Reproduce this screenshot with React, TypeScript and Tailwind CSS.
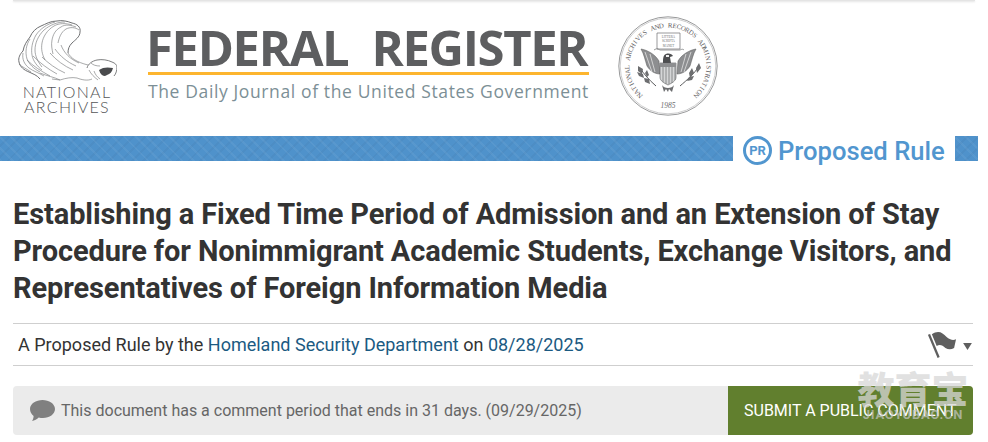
import React from 'react';

const stripes =
  'bg-[repeating-linear-gradient(45deg,rgba(255,255,255,0.05)_0px,rgba(255,255,255,0.05)_2px,transparent_2px,transparent_8px),repeating-linear-gradient(-45deg,rgba(0,0,0,0.03)_0px,rgba(0,0,0,0.03)_2px,transparent_2px,transparent_8px)]';

const ArchivesEagle = () => (
  <svg viewBox="0 0 100 62" className="w-[100px] h-[62px]" fill="none" stroke="#6f7072" strokeWidth="0.6">
    {/* wing outline and feathers */}
    <path d="M63 12c1-5-3-8-8-9-5-2-10-3-15-2-7 0-11 3-16 5-5 2-9 6-11 11-3 4-6 8-7 14-3 3-5 7-4 11 1 5 5 8 10 10 4 2 8 3 11 7" strokeWidth="1" />
    <path d="M63 12c0 5-5 8-8 11-3 3-4 6-4 10" strokeWidth="1" />
    <path d="M59 7c-5-2-11-3-15 0-6 3-8 8-9 13-1 5 0 9 1 14" />
    <path d="M62 10c-4-3-9-3-13-1-5 3-7 9-8 14" />
    <path d="M55 5c-6-2-13-2-18 1-7 4-11 11-12 17-1 6 0 11 3 17" />
    <path d="M48 2c-8 0-15 3-21 8-6 6-9 13-9 20 0 6 3 12 7 17" />
    <path d="M38 2c-8 2-15 7-19 13-4 7-5 14-4 20 1 6 5 11 10 15" />
    <path d="M13 19c-4 6-5 13-3 20 2 5 7 10 13 13" />
    <path d="M6 33c-1 6 1 11 6 15 4 3 10 5 15 8" />
    <path d="M2 44c3 3 8 5 12 8" />
    <path d="M10 40c6 6 14 11 23 16" />
    <path d="M16 36c7 7 15 13 24 18" />
    <path d="M25 37c6 6 14 12 23 16" />
    <path d="M33 33c6 7 14 13 23 17" />
    <path d="M38 29c5 7 12 13 21 17" />
    <path d="M44 25c3 8 9 14 18 18" />
    <path d="M51 33c3 5 8 9 20 12" />
    <path d="M23 53c7 3 14 4 20 7l-8-1M43 60c6-2 12-3 17-2 5 2 11 3 15 1" />
    {/* head */}
    <path d="M70 48c1-4 5-7 10-8 5-1 11 0 15 2 3 1 5 3 5 5 0 3-1 7-3 9" strokeWidth="0.9" />
    <path d="M82 50c4-3 9-3 14-2-1 4-3 6-6 7-3 2-6 1-8-5z" fill="#4a4b4d" stroke="none" />
    <path d="M74 43c2 2 5 3 9 3M72 50c2 4 5 7 9 10M77 51c1 3 3 6 6 8" />
  </svg>
);

const ringLetters = 'NATIONAL ARCHIVES AND RECORDS ADMINISTRATION'.split('');

const SealRing = () => (
  <g fontSize="6.8" fill="#5f6062" stroke="none" fontFamily="'Liberation Serif', serif" textAnchor="middle">
    {ringLetters.map((ch, i) => (
      <text
        key={i}
        x="50"
        y="11.5"
        transform={`rotate(${-136 + (i * 272) / (ringLetters.length - 1)} 50 50)`}
      >
        {ch}
      </text>
    ))}
  </g>
);

const SealEagle = () => (
  <g>
    {/* scroll */}
    <path d="M39 17h23v16H39z" fill="#fff" stroke="#6d6e70" strokeWidth="0.7" />
    <path d="M36 34c3-2 4-1 6 0h20c2-1 3-1 4 0" stroke="#6d6e70" strokeWidth="0.7" fill="none" />
    <g fontSize="3.2" fill="#6d6e70" textAnchor="middle" fontFamily="'Liberation Serif', serif">
      <text x="50.5" y="21.5">LITTERA</text>
      <text x="50.5" y="26">SCRIPTA</text>
      <text x="50.5" y="30.5">MANET</text>
    </g>
    {/* wings */}
    <path d="M23 33c6 1 14 5 18 12l1 13c-5 0-10-3-13-8-2-6-3-12-6-17z" fill="#8d8e90" stroke="#555" strokeWidth="0.5" />
    <path d="M78 33c-6 1-14 5-18 12l-1 13c5 0 10-3 13-8 2-6 3-12 6-17z" fill="#8d8e90" stroke="#555" strokeWidth="0.5" />
    <path d="M27 36l7 20M32 38l5 18M68 38l-5 18M73 36l-7 20" stroke="#eee" strokeWidth="0.7" />
    {/* head */}
    <path d="M45 47c0-4 0-8 3-9 3-1 6 0 7 2l-3 1 1 6z" fill="#4d4e50" />
    <path d="M48 39h3v2h-3z" fill="#eee" />
    {/* shield */}
    <path d="M42 47h16v14c0 4-4 6-8 8-4-2-8-4-8-8z" fill="#d5d6d7" stroke="#58595b" strokeWidth="0.6" />
    <path d="M42 47h16v4H42z" fill="#8d8e90" />
    <path d="M45 51v15M48 51v17M51 51v17M54 51v16M57 51v13" stroke="#77787a" strokeWidth="0.8" />
    {/* olive and arrows */}
    <path d="M22 52c4 6 9 12 16 18" stroke="#58595b" strokeWidth="1" fill="none" />
    <path d="M20 50l5 3-1 5-4-3zM19 56l6 2 1 4-5-2zM26 62l5 1 1 5-5-2zM29 54l2 5-2 2-2-4z" fill="#6d6e70" />
    <path d="M81 50c-4 7-12 14-19 20" stroke="#58595b" strokeWidth="1" fill="none" />
    <path d="M81 47l2 5-4 5-1-5zM74 52l2 5-4 5-1-5zM76 60l-2 4-5 1 2-4z" fill="#6d6e70" />
    {/* tail */}
    <path d="M44 69c2 4 10 4 12 0l-2 7-3-3-1 3-2-3-2 3z" fill="#6d6e70" />
  </g>
);

const Seal = () => (
  <svg viewBox="0 0 100 100" className="w-[100px] h-[100px]" fill="none">
    <circle cx="50" cy="50" r="49.2" stroke="#6d6e70" strokeWidth="0.7" />
    <circle cx="50" cy="50" r="47.8" stroke="#9a9b9d" strokeWidth="0.5" />
    <SealRing />
    <text x="50" y="92" textAnchor="middle" fontSize="7.5" fontStyle="italic" fill="#6d6e70" fontFamily="'Liberation Serif', serif">
      1985
    </text>
    <SealEagle />
  </svg>
);

const PrBadge = () => (
  <div className="w-[29px] h-[29px] rounded-full border-[3px] border-[#5196cf] flex items-center justify-center">
    <span className="text-[13px] font-bold leading-none text-[#5196cf]">PR</span>
  </div>
);

export default function App() {
  return (
    <div className="relative w-[988px] h-[442px] overflow-hidden bg-white font-['Roboto',sans-serif]">
      {/* top shadow strip */}
      <div className="mx-[13px] h-[1px] w-[962px] bg-[#e4e4e4] shadow-[0_1px_2px_rgba(0,0,0,0.15)]" />

      {/* masthead */}
      <div className="flex items-start h-[135px] pl-[17px]">
        <div className="flex flex-col items-center w-[100px] mt-[19px]">
          <ArchivesEagle />
          <div className="mt-[3px] text-center font-['Lato',sans-serif] font-light text-[16px] leading-[14.5px] tracking-[1.3px] text-[#555658]">
            <div>NATIONAL</div>
            <div>ARCHIVES</div>
          </div>
        </div>

        <div className="ml-[31px] mt-[21px] w-[441px]">
          <div className="flex -ml-[2px] font-['Open_Sans',sans-serif] font-bold text-[49px] leading-[50px] tracking-[-1.35px] whitespace-nowrap text-[#5d5e60]">
            <span>FEDERAL</span>
            <span className="ml-[23px]">REGISTER</span>
          </div>
          <div className="h-[3px] bg-[#fdb52e]" />
          <div className="mt-[4px] font-['Open_Sans',sans-serif] text-[17.5px] leading-[24px] tracking-[0.62px] whitespace-nowrap text-[#7c8f96]">
            The Daily Journal of the United States Government
          </div>
        </div>

        <div className="ml-[29px] mt-[15px]">
          <Seal />
        </div>
      </div>

      {/* document type banner */}
      <div className="flex items-start h-[30px]">
        <div className={`w-[733px] h-[25px] bg-[#4f92cb] ${stripes}`} />
        <div className="ml-[10px]">
          <PrBadge />
        </div>
        <div className="ml-[6px] w-[167px] font-medium text-[25.6px] leading-[30px] whitespace-nowrap text-[#5196cf]">
          Proposed Rule
        </div>
        <div className={`ml-[10px] w-[23px] h-[25px] bg-[#4f92cb] ${stripes}`} />
      </div>

      {/* title */}
      <h1 className="mx-[13px] mt-[30px] text-[29px] leading-[37px] font-bold tracking-[-0.1px] text-[#333333]">
        Establishing a Fixed Time Period of Admission and an Extension of Stay Procedure for Nonimmigrant Academic
        Students, Exchange Visitors, and Representatives of Foreign Information Media
      </h1>

      {/* byline */}
      <div className="mx-[13px] mt-[16px] w-[960px] h-[43px] border-y border-[#cfcfcf] flex items-center justify-between pl-[5px] pr-[1px]">
        <div className="text-[18px] text-[#333333]">
          A Proposed Rule by the <a className="text-[#1b5a82]">Homeland Security Department</a> on{' '}
          <a className="text-[#1b5a82]">08/28/2025</a>
        </div>
        <div className="flex items-center gap-[6px]">
          <svg viewBox="0 0 30 28" className="w-[29px] h-[28px]">
            <path d="M1 3l10 24" stroke="#5f5f5f" strokeWidth="2.4" />
            <path d="M4 3c4-3 8-3 11-1 3 2 5 5 8 6 2 1 4 1 6 0l-2 9c-3 2-6 2-9 0-3-3-6-4-9-2z" fill="#5f5f5f" />
          </svg>
          <svg viewBox="0 0 10 8" className="w-[9px] h-[7px] mt-[4px]">
            <path d="M0 0h10L5 8z" fill="#5f5f5f" />
          </svg>
        </div>
      </div>

      {/* comment bar */}
      <div className="mx-[13px] mt-[20px] w-[960px] h-[49px] flex rounded-[4px] overflow-hidden bg-[#ebebeb]">
        <div className="flex-1 flex items-center pl-[17px] text-[16px] text-[#666666]">
          <svg viewBox="0 0 25 21" className="w-[25px] h-[21px] mr-[6px]">
            <path d="M12.5 0C19 0 25 3.8 25 9c0 5-5.500 9-12 9-1.500 0-3-.2-4.300-.6C7 19 4.500 20.500 2 21c1-1.300 1.500-3 1.600-5C1.300 14.200 0 11.800 0 9 0 3.800 6 0 12.500 0z" fill="#808080" />
          </svg>
          This document has a comment period that ends in 31 days. (09/29/2025)
        </div>
        <div className="w-[245px] flex items-center pl-[16px] bg-[#617f2e] text-[16px] text-white whitespace-nowrap">
          SUBMIT A PUBLIC COMMENT
        </div>
      </div>

      {/* watermark */}
      <div className="absolute left-[856px] top-[367px] w-[114px] text-center pointer-events-none">
        <div className="font-['Noto_Sans_CJK_SC',sans-serif] font-black text-[37px] leading-[42px] text-[#d8d8d8]/75">
          教育宝
        </div>
        <div className="text-[13px] leading-[12px] font-bold tracking-[0.8px] text-[#c8c8c8]/70">JIAOYUBAO.CN</div>
      </div>
    </div>
  );
}
